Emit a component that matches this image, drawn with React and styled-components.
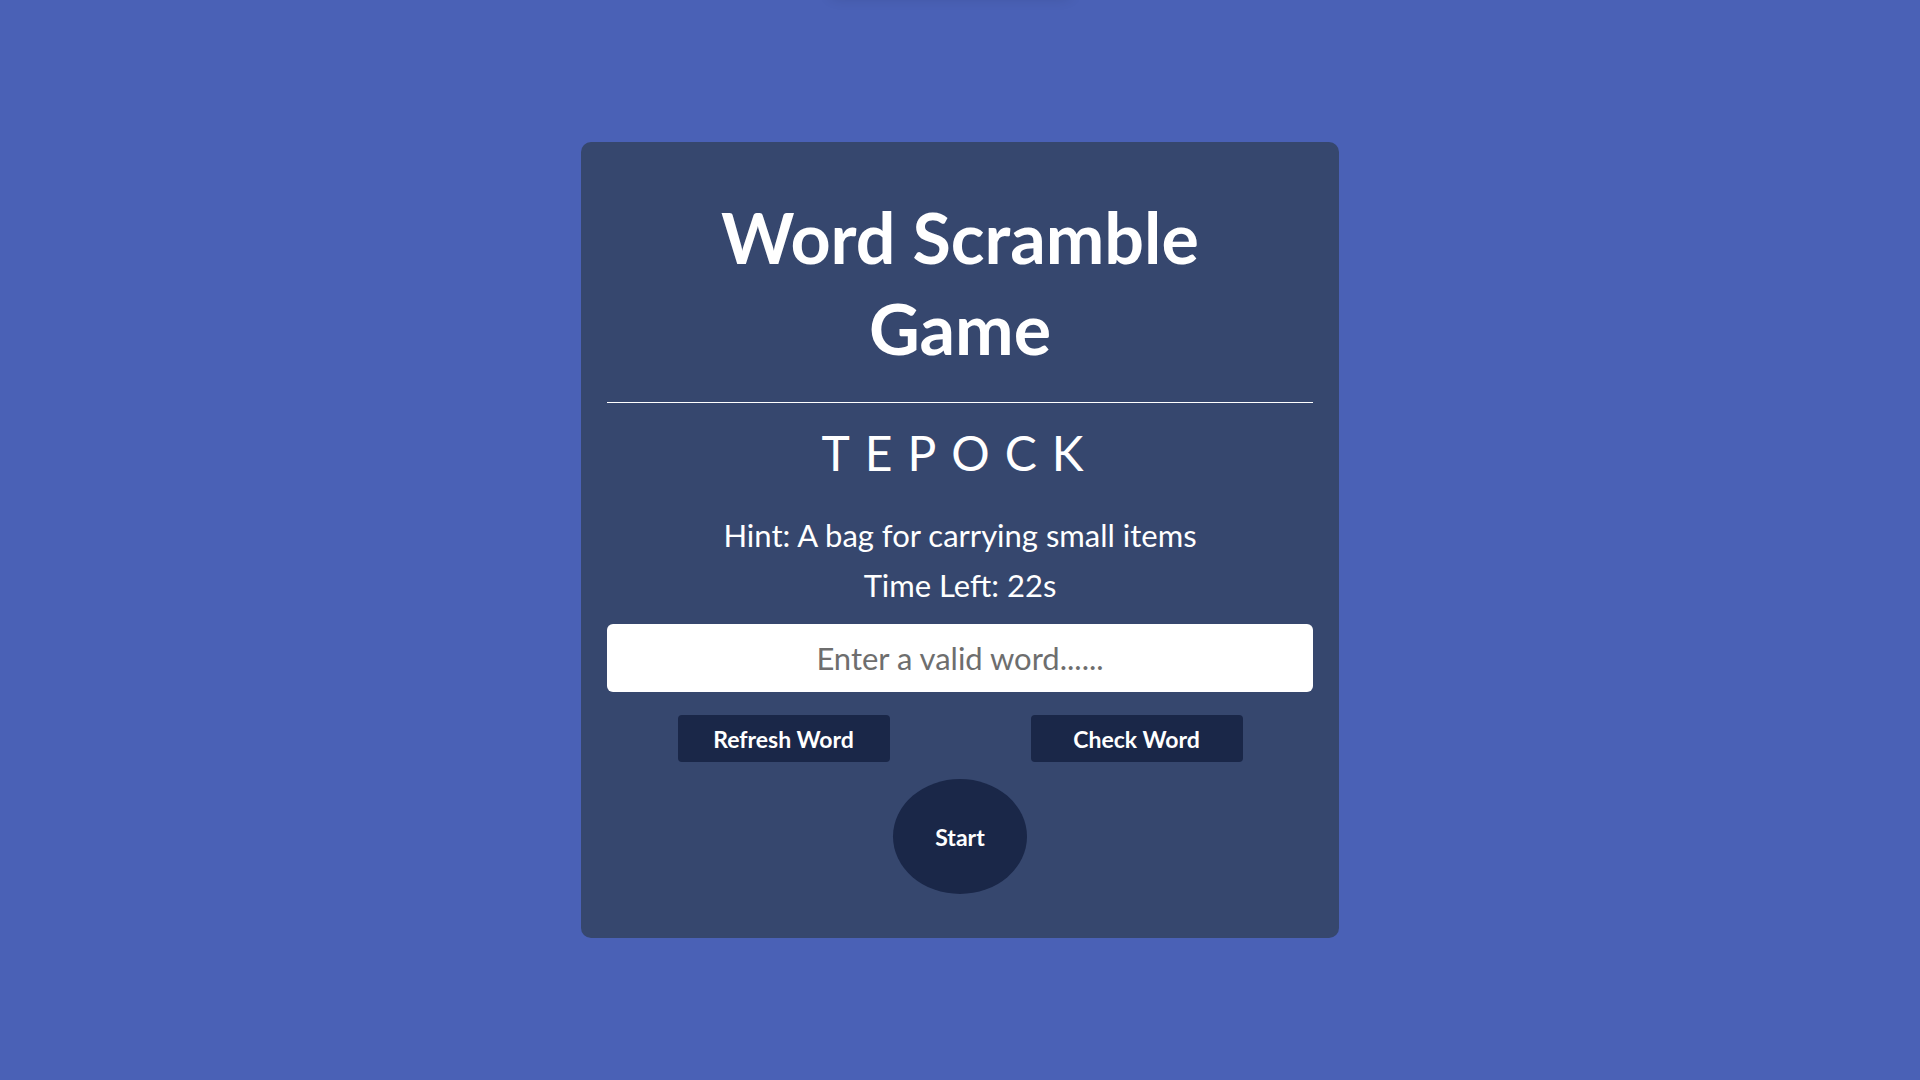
import React from "react";
import styled, { createGlobalStyle } from "styled-components";

const Global = createGlobalStyle`
  * { box-sizing: border-box; }
  html, body { margin: 0; padding: 0; }
  body {
    background: #4a61b6;
    font-family: Lato, "Noto Sans", sans-serif;
    color: #ffffff;
    overflow: hidden;
  }
`;

const Page = styled.main`
  min-height: 100vh;
  display: flex;
  align-items: center;
  justify-content: center;
`;

const Toast = styled.div`
  position: fixed;
  top: -60px;
  left: 50%;
  transform: translateX(-54%);
  width: 240px;
  height: 56px;
  border-radius: 6px;
  background: #4a61b6;
  box-shadow: 0 2px 14px rgba(0, 0, 0, 0.12);
`;

const Card = styled.section`
  width: 758px;
  background: #36476e;
  border-radius: 10px;
  padding: 50px 26px 44px;
  display: flex;
  flex-direction: column;
  align-items: stretch;
  text-align: center;
`;

const Title = styled.h1`
  margin: 0;
  font-size: 70px;
  line-height: 91px;
  font-weight: 700;
  padding: 0 100px;
`;

const Divider = styled.hr`
  margin: 28px 0 0;
  border: none;
  border-top: 1px solid #ffffff;
  height: 0;
`;

const Scrambled = styled.div`
  margin-top: 22px;
  font-size: 48px;
  line-height: 56px;
  font-weight: 400;
  letter-spacing: 15px;
`;

const Info = styled.p`
  margin: ${(p) => p.$top}px 0 0;
  font-size: 31px;
  line-height: 37px;
  font-weight: 400;
`;

const Input = styled.input`
  margin-top: 20px;
  height: 68px;
  width: 100%;
  border: none;
  border-radius: 6px;
  background: #ffffff;
  text-align: center;
  font-family: Lato, "Noto Sans", sans-serif;
  font-size: 31px;
  color: #333;
  outline: none;
  &::placeholder { color: #6e6e6e; }
`;

const ButtonRow = styled.div`
  margin-top: 23px;
  display: flex;
  justify-content: space-around;
`;

const ActionButton = styled.button`
  width: 212px;
  height: 47px;
  border: none;
  border-radius: 4px;
  background: #1a2748;
  color: #ffffff;
  font-family: Lato, "Noto Sans", sans-serif;
  font-size: 23px;
  font-weight: 700;
  cursor: pointer;
`;

const StartButton = styled.button`
  align-self: center;
  margin-top: 17px;
  width: 134px;
  height: 115px;
  border: none;
  border-radius: 50%;
  background: #1a2748;
  color: #ffffff;
  font-family: Lato, "Noto Sans", sans-serif;
  font-size: 23px;
  font-weight: 700;
  cursor: pointer;
`;

export default function App() {
  return (
    <>
      <Global />
      <Toast />
      <Page>
        <Card>
          <Title>Word Scramble Game</Title>
          <Divider />
          <Scrambled>TEPOCK</Scrambled>
          <Info $top={36}>Hint: A bag for carrying small items</Info>
          <Info $top={13}>Time Left: 22s</Info>
          <Input placeholder="Enter a valid word......" />
          <ButtonRow>
            <ActionButton>Refresh Word</ActionButton>
            <ActionButton>Check Word</ActionButton>
          </ButtonRow>
          <StartButton>Start</StartButton>
        </Card>
      </Page>
    </>
  );
}
